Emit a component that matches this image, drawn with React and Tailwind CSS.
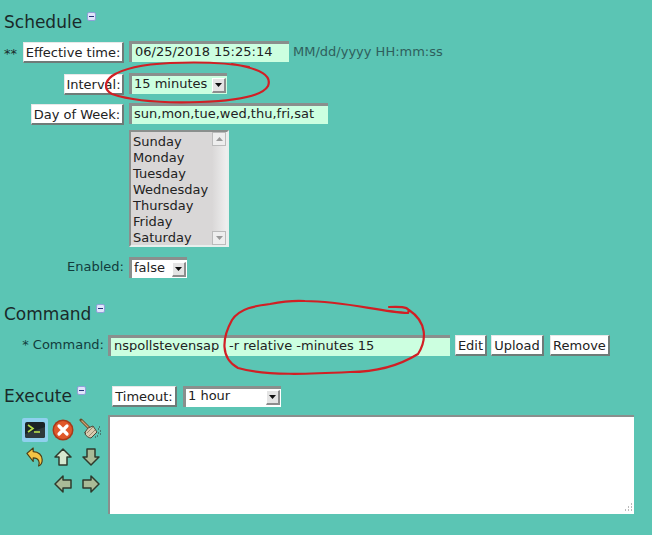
const font = { fontFamily: '"DejaVu Sans", sans-serif' };

function Toggle({ className = "" }) {
  return (
    <span className={"inline-block w-[9px] h-[9px] rounded-[2px] border border-[#8f9fd8] bg-[#dfe5fa] relative " + className}>
      <span className="absolute left-[1px] right-[1px] top-[3px] h-[1px] bg-[#27357a]" />
    </span>
  );
}

function LabelBtn({ children, className = "" }) {
  return (
    <span className={"inline-flex items-center justify-center h-[21px] bg-white text-[#222] border-t border-l border-[#e8e8e8] border-r-2 border-b-2 border-r-[#6f7b78] border-b-[#6f7b78] leading-none " + className}>
      {children}
    </span>
  );
}

function Field({ children, className = "" }) {
  return (
    <div className={"h-[21px] bg-[#ccffe0] border-t-[3px] border-l-[3px] border-t-[#8a8f8d] border-l-[#8a8f8d] pb-[4px] text-[#222] flex items-center whitespace-nowrap overflow-hidden leading-none " + className}>
      {children}
    </div>
  );
}

function Arrow({ size = "w-[14px] h-[15px]" }) {
  return (
    <span className={"flex items-center justify-center bg-[#e4e4e4] border-r-2 border-b-2 border-r-[#8d8d8d] border-b-[#8d8d8d] border-t border-l border-t-white border-l-white " + size}>
      <svg width="7" height="4" viewBox="0 0 7 4"><path d="M0 0h7L3.5 4z" fill="#111" /></svg>
    </span>
  );
}

function Select({ children, className = "", bg = "bg-[#ccffe0]" }) {
  return (
    <div className={"h-[21px] border-t-[3px] border-l-[3px] border-t-[#8a8f8d] border-l-[#8a8f8d] flex items-center justify-between pr-[1px] pl-[2px] text-[#222] leading-none " + bg + " " + className}>
      <span className="mb-[4px]">{children}</span>
      <Arrow />
    </div>
  );
}

function Row({ label, children, className = "" }) {
  return (
    <div className={"flex items-start " + className}>
      <div className="w-[124px] flex justify-end items-start shrink-0">{label}</div>
      <div className="ml-[5px] flex items-start">{children}</div>
    </div>
  );
}

function Terminal() {
  return (
    <span className="w-[26px] h-[24px] bg-[#8fd0ee] flex items-center justify-center rounded-[2px]">
      <svg width="22" height="20" viewBox="0 0 22 20">
        <rect x="1" y="2" width="20" height="16" rx="2" fill="#1b2326" />
        <path d="M1 14 L21 7 V16 a2 2 0 0 1-2 2 H3 a2 2 0 0 1-2-2z" fill="#2e3a3c" />
        <path d="M4 5l5 3.5L4 12" fill="none" stroke="#b7e04a" strokeWidth="1.6" />
        <path d="M10 12h6" stroke="#b7e04a" strokeWidth="1.6" />
      </svg>
    </span>
  );
}

function StopIcon() {
  return (
    <svg width="22" height="22" viewBox="0 0 22 22">
      <circle cx="11" cy="11" r="10.5" fill="#a83a1a" />
      <circle cx="11" cy="11" r="9" fill="#e0582a" />
      <path d="M7 7l8 8M15 7l-8 8" stroke="#fff" strokeWidth="3.2" strokeLinecap="round" />
    </svg>
  );
}

function BroomIcon() {
  return (
    <svg width="24" height="24" viewBox="0 0 24 24">
      <path d="M2 2l9 9" stroke="#6b4a25" strokeWidth="3" strokeLinecap="round" />
      <path d="M2.5 2.5l8 8" stroke="#c9a272" strokeWidth="1.2" />
      <path d="M9 10l5-2 4 6-6 6c-2 0-5-2-6-4l1-1-1.500 0z" fill="#d9cbb0" stroke="#4d4636" strokeWidth="1" />
      <path d="M8 15l6-6M10 18l6-6" stroke="#8a7c60" strokeWidth=".8" />
      <path d="M19 11h1M21 13h1M19 15h1M21 16h1M18 18h1M16 19h1M20 9h1" stroke="#333" strokeWidth="1" />
    </svg>
  );
}

function UndoIcon() {
  return (
    <svg width="18" height="20" viewBox="0 0 20 22">
      <path d="M1 7l7-6v4c6 0 10 4 10 9 0 3-1.500 6-4 7 1-2 1-4 0-6-1-2-3-3-6-3v4z" fill="#f3c445" stroke="#4d3d14" strokeWidth="1.300" strokeLinejoin="round" />
    </svg>
  );
}

function Arrowhead({ dir }) {
  const rot = { up: 0, down: 180, left: 270, right: 90 }[dir];
  const fill = dir === "up" ? "#d5e8cf" : "#a9bb97";
  return (
    <svg width="18" height="18" viewBox="0 0 18 18" style={{ transform: `rotate(${rot}deg)` }}>
      <path d="M9 1l8 8h-4v8H5V9H1z" fill={fill} stroke="#2f3a2c" strokeWidth="1.500" strokeLinejoin="round" />
    </svg>
  );
}

export default function App() {
  return (
    <div style={font} className="relative w-[652px] h-[535px] overflow-hidden bg-[#5bc5b4] text-[13px] text-[#123]">
      <div className="pt-[13px]">
        <div className="pl-[4px] flex items-start h-[19px] text-[17px] leading-[19px] text-[#1a2a2a]">
          Schedule<Toggle className="ml-[5px] mt-[-1px]" />
        </div>

        <div className="relative mt-[9px]">
          <span className="absolute left-[4px] top-[3px] text-[#1a2a2a]">**</span>
          <Row label={<LabelBtn className="w-[101px] mt-[1px]">Effective time:</LabelBtn>}>
            <Field className="w-[160px] pl-[3px]">06/25/2018 15:25:14</Field>
            <span className="ml-[4px] mt-[3px] leading-[15px] text-[#2f5f5c]">MM/dd/yyyy HH:mm:ss</span>
          </Row>
        </div>

        <Row className="mt-[10px]" label={<LabelBtn className="w-[60px] mt-[1px]">Interval:</LabelBtn>}>
          <Select className="w-[98px]">15 minutes</Select>
        </Row>

        <Row className="mt-[8px]" label={<LabelBtn className="w-[93px] mt-[1px]">Day of Week:</LabelBtn>}>
          <Field className="w-[199px] pl-[2px]">sun,mon,tue,wed,thu,fri,sat</Field>
        </Row>

        <div className="ml-[129px] mt-[5px] w-[100px] h-[117px] bg-[#d9d7d7] border-t-[2px] border-l-[2px] border-t-[#8a8f8d] border-l-[#8a8f8d] border-r-2 border-b-2 border-r-[#e8efed] border-b-[#e8efed] flex">
          <div className="flex-1 pl-[2px] pt-[2px] text-[#222] leading-[16px]">
            <div>Sunday</div>
            <div>Monday</div>
            <div>Tuesday</div>
            <div>Wednesday</div>
            <div>Thursday</div>
            <div>Friday</div>
            <div>Saturday</div>
          </div>
          <div className="w-[15px] flex flex-col justify-between bg-gradient-to-r from-[#d9d7d7] to-[#efefef]">
            <span className="h-[14px] w-[14px] bg-[#eee] border border-[#bbb] flex items-center justify-center">
              <svg width="7" height="4" viewBox="0 0 7 4"><path d="M3.5 0L7 4H0z" fill="#999" /></svg>
            </span>
            <span className="h-[14px] w-[14px] bg-[#eee] border border-[#bbb] flex items-center justify-center">
              <svg width="7" height="4" viewBox="0 0 7 4"><path d="M0 0h7L3.500 4z" fill="#999" /></svg>
            </span>
          </div>
        </div>

        <Row className="mt-[10px]" label={<span className="leading-[20px] text-[#123c3c]">Enabled:</span>}>
          <Select className="w-[58px]" bg="bg-white">false</Select>
        </Row>

        <div className="mt-[27px] pl-[4px] flex items-start h-[19px] text-[17px] leading-[19px] text-[#1a2a2a]">
          Command<Toggle className="ml-[5px] mt-[-1px]" />
        </div>

        <div className="flex items-center mt-[11px]">
          <span className="w-[104px] mb-[1px] text-right text-[#123c3c] shrink-0">* Command:</span>
          <Field className="ml-[4px] w-[342px] pl-[3px]">
            <span className="w-[105px] overflow-hidden shrink-0">nspollstevensapi</span>
            <span className="ml-[10px]">-r relative -minutes 15</span>
          </Field>
          <LabelBtn className="ml-[5px] w-[32px]">Edit</LabelBtn>
          <LabelBtn className="ml-[4px] w-[53px]">Upload</LabelBtn>
          <LabelBtn className="ml-[6px] w-[60px]">Remove</LabelBtn>
        </div>

        <div className="flex items-center mt-[29px] h-[22px]">
          <div className="pl-[4px] flex items-start w-[112px] text-[17px] leading-[19px] text-[#1a2a2a]">
            Execute<Toggle className="ml-[5px] mt-[-1px]" />
          </div>
          <LabelBtn className="w-[65px] mt-[1px]">Timeout:</LabelBtn>
          <Select className="ml-[6px] w-[98px]" bg="bg-white">1 hour</Select>
        </div>

        <div className="flex mt-[8px]">
          <div className="w-[108px] shrink-0 pl-[21px] pt-[1px]">
            <div className="grid grid-cols-[28px_28px_28px] grid-rows-[27px_27px_27px] items-center justify-items-center w-[84px]">
              <Terminal />
              <StopIcon />
              <BroomIcon />
              <UndoIcon />
              <Arrowhead dir="up" />
              <Arrowhead dir="down" />
              <span />
              <Arrowhead dir="left" />
              <Arrowhead dir="right" />
            </div>
          </div>
          <div className="relative w-[526px] h-[99px] bg-white border-t-[2px] border-l-[2px] border-t-[#8a8f8d] border-l-[#8a8f8d]">
            <svg className="absolute right-[1px] bottom-[1px]" width="11" height="11" viewBox="0 0 11 11">
              <path d="M9 2h1M6 5h1M9 5h1M3 8h1M6 8h1M9 8h1" stroke="#777" strokeWidth="1" />
            </svg>
          </div>
        </div>
      </div>

      <svg className="absolute inset-0 pointer-events-none" width="652" height="535" viewBox="0 0 652 535" fill="none">
        <path d="M249 67 C225 62 195 62 170 63 C150 64 125 67 112 76 C104 82 104 90 112 94 C135 102 170 103 200 102 C230 101 262 97 268 86 C272 76 262 69 232 64" stroke="#d11f24" strokeWidth="2.200" strokeLinecap="round" />
        <path d="M389 307 C408 306 410 309 408 313 C380 312 345 301 305 301 C290 300 280 302 270 304 C255 306 240 308 232 320 C222 338 220 358 238 368 C265 376 310 374 350 372 C385 372 405 362 418 354 C427 340 427 322 409 310" stroke="#d11f24" strokeWidth="2.200" strokeLinecap="round" />
      </svg>
    </div>
  );
}
